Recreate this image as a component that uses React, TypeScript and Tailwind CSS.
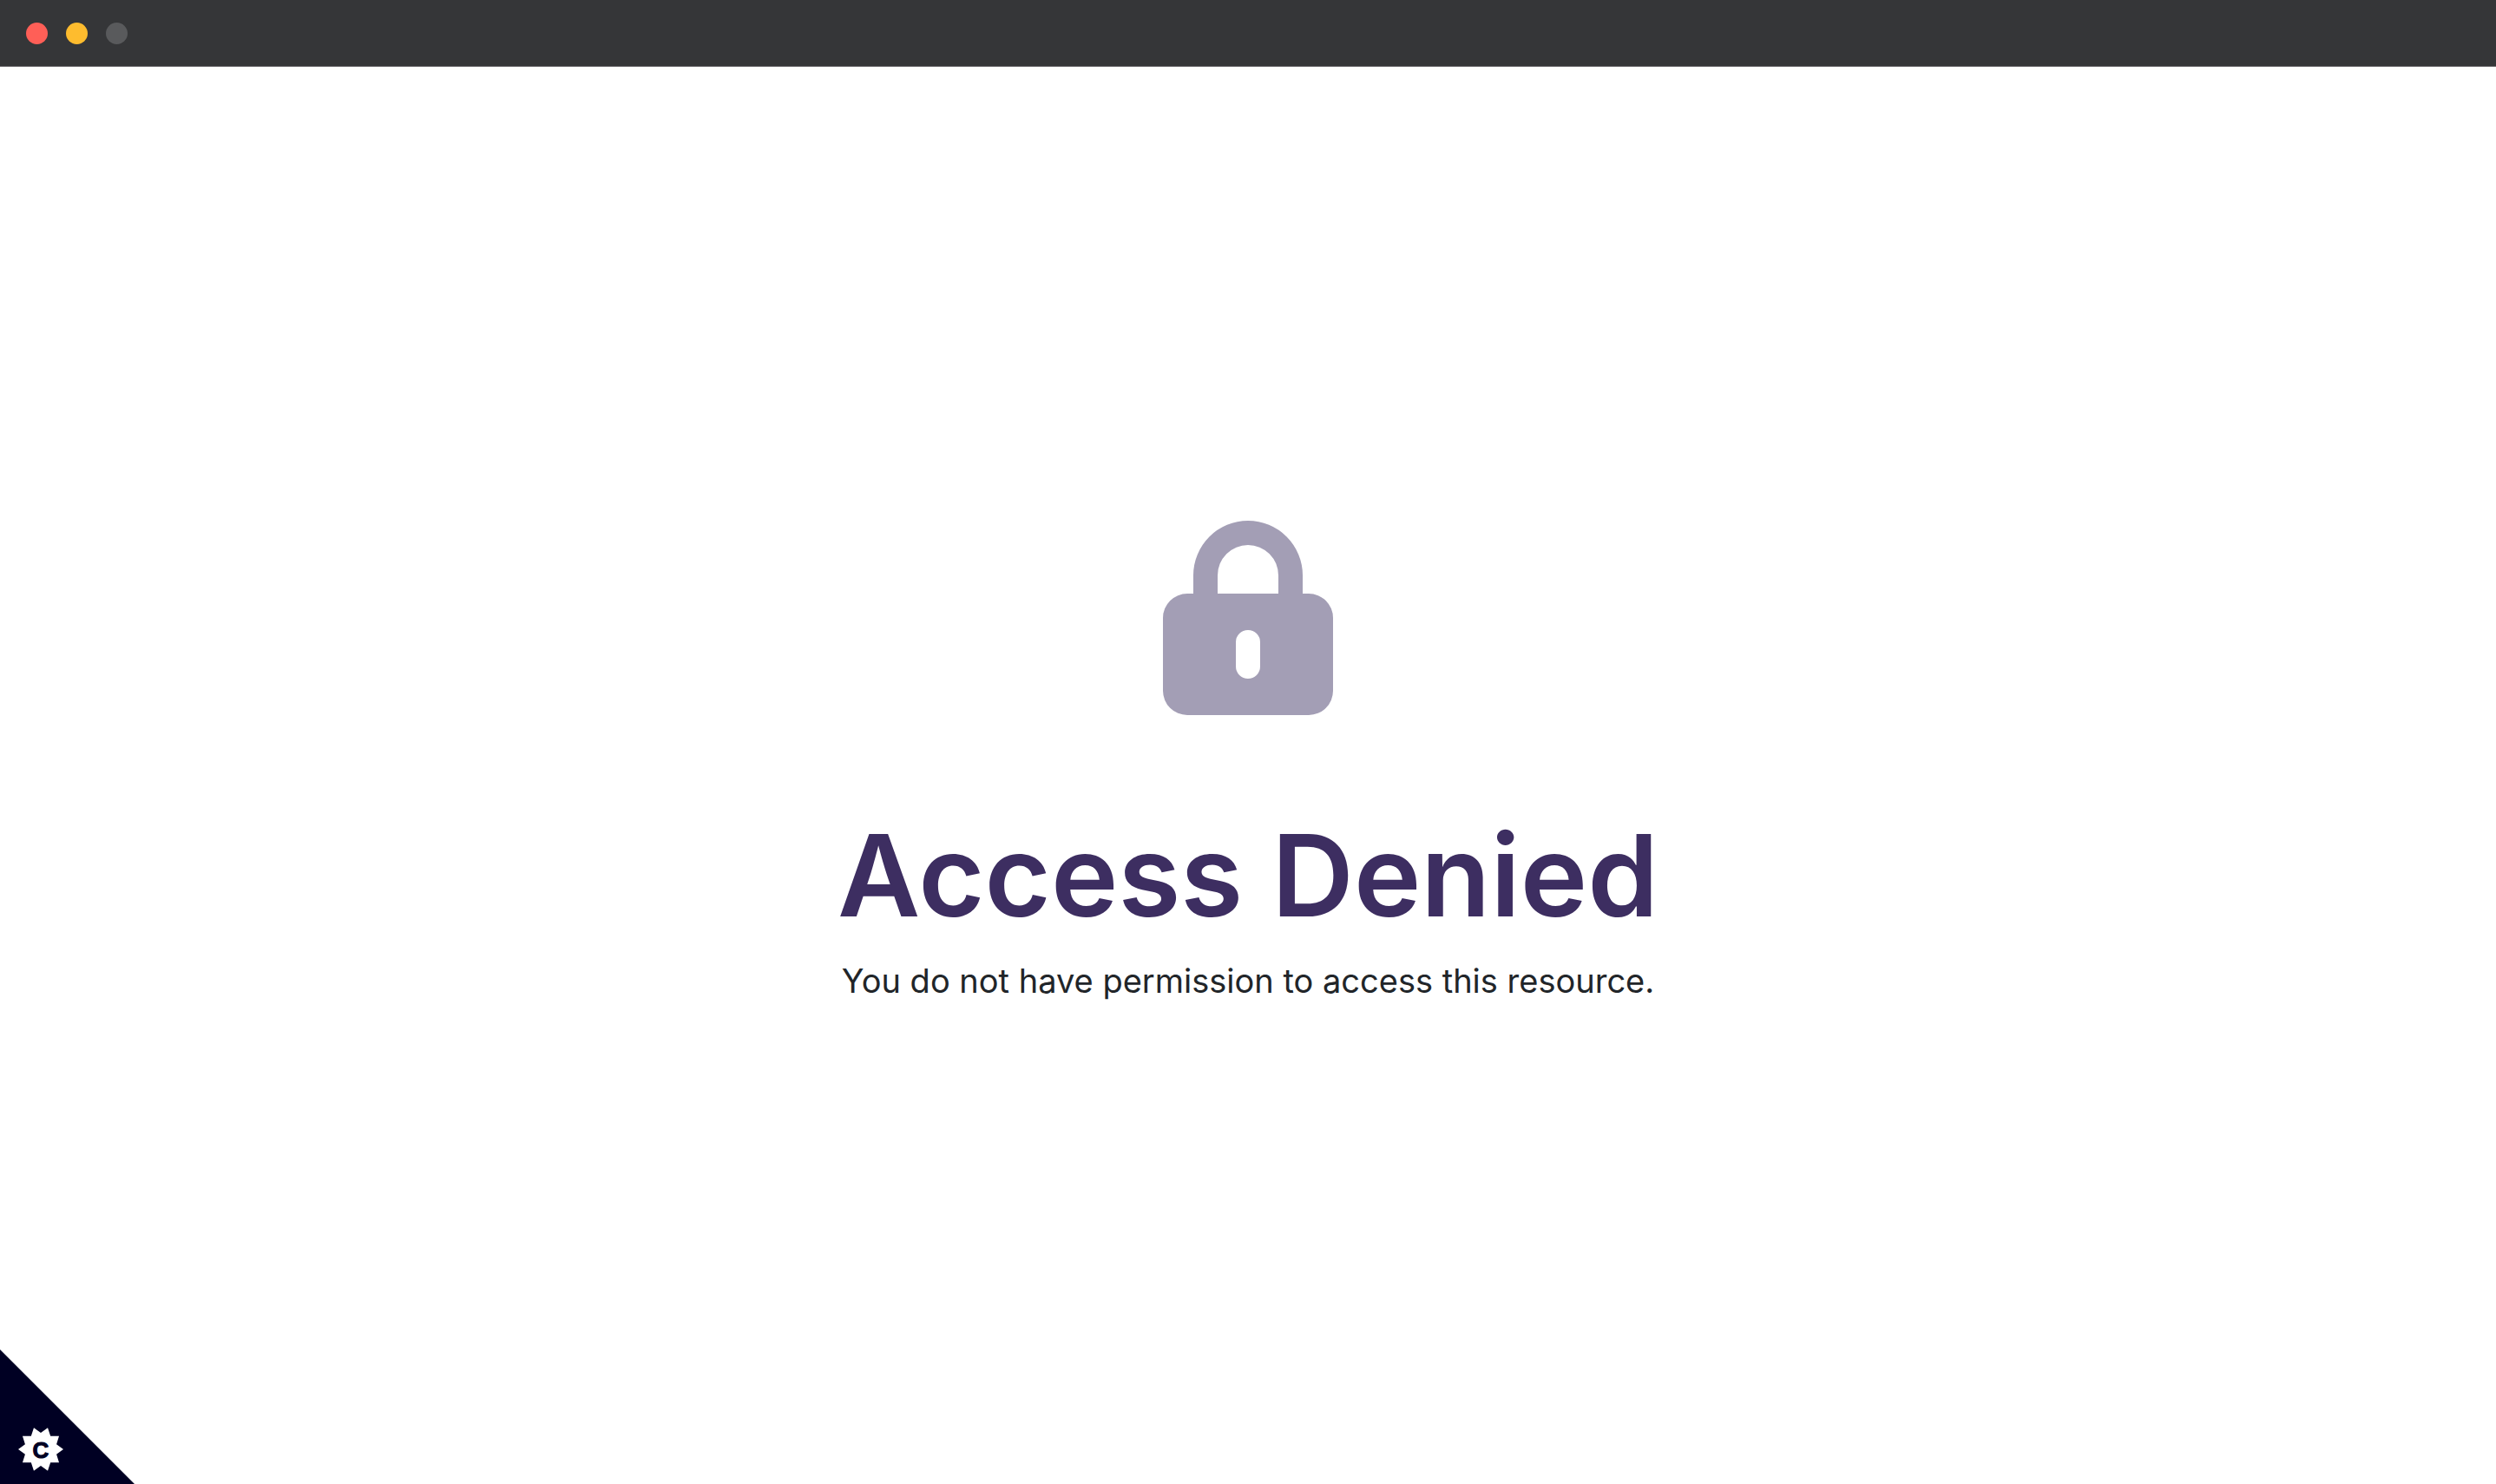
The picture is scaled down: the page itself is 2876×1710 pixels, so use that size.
function LockIcon() {
  return (
    <svg viewBox="0 0 448 512" className="h-56 w-49 text-[#a39eb5]" fill="currentColor" aria-hidden="true">
      <path
        fillRule="evenodd"
        d="M80 192v-48a144 144 0 0 1 288 0v48h16a64 64 0 0 1 64 64v192a64 64 0 0 1-64 64H64a64 64 0 0 1-64-64V256a64 64 0 0 1 64-64h16Zm64 0h160v-48a80 80 0 0 0-160 0v48Zm48 128v64a32 32 0 0 0 64 0v-64a32 32 0 0 0-64 0Z"
      />
    </svg>
  );
}

const badgePoints = Array.from({ length: 20 }, (_, i) => {
  const radius = i % 2 === 0 ? 26 : 19;
  const angle = (i * Math.PI) / 10;
  return `${(26 + radius * Math.cos(angle)).toFixed(2)},${(26 + radius * Math.sin(angle)).toFixed(2)}`;
}).join(" ");

function CookieButton() {
  return (
    <button
      type="button"
      aria-label="Cookie settings"
      className="fixed bottom-0 left-0 flex size-[155px] items-end bg-[#000023] pb-[14px] pl-[21px] [clip-path:polygon(0_0,100%_100%,0_100%)]"
    >
      <svg viewBox="0 0 52 52" className="size-13" aria-hidden="true">
        <polygon points={badgePoints} fill="#fff" />
        <text
          x="26"
          y="36"
          textAnchor="middle"
          fill="#000023"
          stroke="#000023"
          strokeWidth="1"
          className="font-['Liberation_Sans',Arial,sans-serif] text-[26px] font-bold"
        >
          C
        </text>
      </svg>
    </button>
  );
}

export default function App() {
  return (
    <div className="flex min-h-screen flex-col bg-white font-['Inter',sans-serif]">
      <header className="flex h-[77px] items-center gap-[21px] border-b border-[#676568] bg-[#353638] px-[30px]">
        <button type="button" aria-label="Close" className="size-[25px] rounded-full bg-[#ff5f57]" />
        <button type="button" aria-label="Minimize" className="size-[25px] rounded-full bg-[#febc2e]" />
        <button type="button" aria-label="Zoom" disabled className="size-[25px] rounded-full bg-[#595a5c]" />
      </header>
      <main className="flex flex-1 flex-col items-center justify-center pb-7 text-center">
        <LockIcon />
        <h1 className="mt-[108px] text-[131px] leading-[154px] font-semibold text-[#3d2e61]">Access Denied</h1>
        <p className="mt-[14px] text-[38px] leading-[60px] text-[#212529]">
          You do not have permission to access this resource.
        </p>
      </main>
      <CookieButton />
    </div>
  );
}
